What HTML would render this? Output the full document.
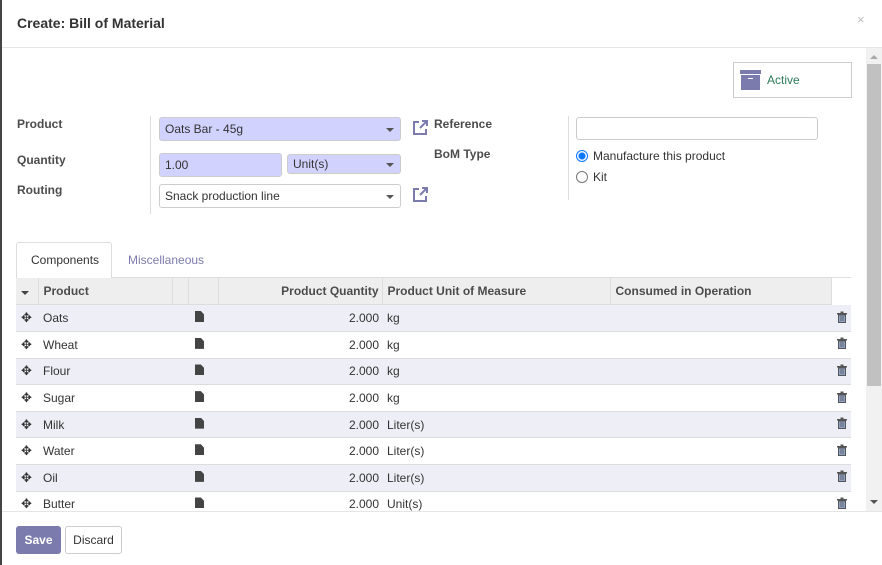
<!DOCTYPE html>
<html><head><style>
*{box-sizing:border-box;margin:0;padding:0}
body{width:882px;height:565px;overflow:hidden;font-family:"Liberation Sans",sans-serif;font-size:12px;color:#4c4c4c;background:#fff;position:relative}
.abs{position:absolute}
.lbl{font-weight:bold;color:#4c4c4c;font-size:12px}
.inp{position:absolute;border:1px solid #ccc;border-radius:3px;height:24px;padding:4px 5px;font-size:12px;color:#333}
.req{background:#d2d2ff}
.caret{position:absolute;right:6px;top:10px;width:0;height:0;border-left:4px solid transparent;border-right:4px solid transparent;border-top:4px solid #555}
table{border-collapse:collapse;position:absolute;left:16px;top:278px;width:835px;table-layout:fixed}
th{background:#eee;height:27px;text-align:left;font-weight:bold;padding:0 5px;border-left:1px solid #ddd;border-bottom:2px solid #ddd}
td{height:26.6px;padding:0 5px;border-bottom:1px solid #ddd;color:#333}
tr.o td{background:#eeeff6}
.r{text-align:right;padding-right:3px}
.doc{display:inline-block;width:9px;height:11px;background:#444;clip-path:polygon(0 0,65% 0,100% 30%,100% 100%,0 100%);margin-left:2px}
.mv{font-size:13px;color:#333}
.t{text-align:right;padding-right:4px}
</style></head><body>
<div class="abs" style="left:0;top:0;width:2px;height:565px;background:#444"></div>
<div class="abs" style="left:17px;top:15px;font-size:14px;font-weight:bold;color:#333">Create: Bill of Material</div>
<div class="abs" style="left:857px;top:12px;color:#bbb;font-size:13px">×</div>
<div class="abs" style="left:2px;top:47px;width:880px;height:1px;background:#e5e5e5"></div>
<div class="abs" style="left:866px;top:48px;width:16px;height:463px;background:#f1f1f1"></div>
<div class="abs" style="left:867px;top:64px;width:14px;height:322px;background:#c1c1c1"></div>
<div class="abs" style="left:870px;top:55px;border-left:4px solid transparent;border-right:4px solid transparent;border-bottom:4px solid #aaa"></div>
<div class="abs" style="left:870px;top:500px;border-left:4px solid transparent;border-right:4px solid transparent;border-top:4px solid #555"></div>
<div class="abs" style="left:733px;top:62px;width:119px;height:36px;border:1px solid #ccc"></div>
<div class="abs" style="left:740px;top:70px;width:21px;height:4px;background:#7c7bad"></div>
<div class="abs" style="left:741px;top:75px;width:19px;height:15px;background:#7c7bad"></div>
<div class="abs" style="left:748px;top:78px;width:5px;height:1px;background:#fff"></div>
<div class="abs" style="left:767px;top:73px;color:#2d7a5b;font-size:12px">Active</div>
<div class="abs lbl" style="left:17px;top:117px">Product</div>
<div class="abs lbl" style="left:17px;top:153px">Quantity</div>
<div class="abs lbl" style="left:17px;top:183px">Routing</div>
<div class="abs" style="left:150px;top:116px;width:1px;height:98px;background:#ddd"></div>
<div class="inp req" style="left:159px;top:117px;width:242px">Oats Bar - 45g<span class="caret"></span></div>
<div class="inp req" style="left:159px;top:153px;width:123px">1.00</div>
<div class="inp req" style="left:287px;top:154px;width:114px;height:20px;padding-top:2px">Unit(s)<span class="caret" style="top:8px"></span></div>
<div class="inp" style="left:159px;top:184px;width:242px">Snack production line<span class="caret"></span></div>
<svg class="abs" style="left:411px;top:119px" width="18" height="18" viewBox="0 0 18 18"><path d="M8 3H3v12h12v-5" fill="none" stroke="#7c7bad" stroke-width="2"/><path d="M9 9L16 2M11 2h5v5" fill="none" stroke="#7c7bad" stroke-width="2"/></svg>
<svg class="abs" style="left:411px;top:186px" width="18" height="18" viewBox="0 0 18 18"><path d="M8 3H3v12h12v-5" fill="none" stroke="#7c7bad" stroke-width="2"/><path d="M9 9L16 2M11 2h5v5" fill="none" stroke="#7c7bad" stroke-width="2"/></svg>
<div class="abs lbl" style="left:434px;top:117px">Reference</div>
<div class="abs lbl" style="left:434px;top:147px">BoM Type</div>
<div class="abs" style="left:568px;top:116px;width:1px;height:84px;background:#ddd"></div>
<div class="inp" style="left:576px;top:117px;width:242px;height:23px"></div>
<div class="abs" style="left:576px;top:150px;width:12px;height:12px;border-radius:50%;border:1px solid #0a75ff;background:radial-gradient(circle,#0a75ff 3px,#fff 4px)"></div>
<div class="abs" style="left:593px;top:149px;color:#333">Manufacture this product</div>
<div class="abs" style="left:576px;top:171px;width:12px;height:12px;border-radius:50%;border:1px solid #777"></div>
<div class="abs" style="left:593px;top:170px;color:#333">Kit</div>
<div class="abs" style="left:16px;top:277px;width:835px;height:1px;background:#ddd"></div>
<div class="abs" style="left:16px;top:242px;width:96px;height:36px;border:1px solid #ddd;border-bottom:none;border-radius:3px 3px 0 0;background:#fff"></div>
<div class="abs" style="left:31px;top:253px;color:#333">Components</div>
<div class="abs" style="left:128px;top:253px;color:#7c7bad">Miscellaneous</div>
<table>
<colgroup><col style="width:22px"><col style="width:134px"><col style="width:16px"><col style="width:30px"><col style="width:164px"><col style="width:228px"><col style="width:221px"><col></colgroup>
<tr><th style="border-left:none"><span style="display:inline-block;border-left:4px solid transparent;border-right:4px solid transparent;border-top:4px solid #444"></span></th><th>Product</th><th></th><th></th><th class="r">Product Quantity</th><th>Product Unit of Measure</th><th>Consumed in Operation</th><th style="background:#fff;border-bottom:none"></th></tr>
</table>
<svg width="0" height="0" style="position:absolute"><defs><symbol id="tr" viewBox="0 0 10 12"><rect x="0" y="2" width="10" height="1.5" fill="#555"/><rect x="3.5" y="0.5" width="3" height="1.5" fill="#555"/><path d="M1.5 4h7v7.5h-7z" fill="#8fa3c7" stroke="#555" stroke-width="1"/><path d="M4 5v5M6 5v5" stroke="#555" stroke-width="0.8"/></symbol></defs></svg>
<table style="top:305px">
<colgroup><col style="width:22px"><col style="width:150px"><col style="width:30px"><col style="width:164px"><col style="width:228px"><col style="width:221px"><col></colgroup>
<tr class="o"><td class="mv">✥</td><td>Oats</td><td><span class="doc"></span></td><td class="r">2.000</td><td>kg</td><td></td><td class="t"><svg width="10" height="12"><use href="#tr"/></svg></td></tr>
<tr><td class="mv">✥</td><td>Wheat</td><td><span class="doc"></span></td><td class="r">2.000</td><td>kg</td><td></td><td class="t"><svg width="10" height="12"><use href="#tr"/></svg></td></tr>
<tr class="o"><td class="mv">✥</td><td>Flour</td><td><span class="doc"></span></td><td class="r">2.000</td><td>kg</td><td></td><td class="t"><svg width="10" height="12"><use href="#tr"/></svg></td></tr>
<tr><td class="mv">✥</td><td>Sugar</td><td><span class="doc"></span></td><td class="r">2.000</td><td>kg</td><td></td><td class="t"><svg width="10" height="12"><use href="#tr"/></svg></td></tr>
<tr class="o"><td class="mv">✥</td><td>Milk</td><td><span class="doc"></span></td><td class="r">2.000</td><td>Liter(s)</td><td></td><td class="t"><svg width="10" height="12"><use href="#tr"/></svg></td></tr>
<tr><td class="mv">✥</td><td>Water</td><td><span class="doc"></span></td><td class="r">2.000</td><td>Liter(s)</td><td></td><td class="t"><svg width="10" height="12"><use href="#tr"/></svg></td></tr>
<tr class="o"><td class="mv">✥</td><td>Oil</td><td><span class="doc"></span></td><td class="r">2.000</td><td>Liter(s)</td><td></td><td class="t"><svg width="10" height="12"><use href="#tr"/></svg></td></tr>
<tr><td class="mv">✥</td><td>Butter</td><td><span class="doc"></span></td><td class="r">2.000</td><td>Unit(s)</td><td></td><td class="t"><svg width="10" height="12"><use href="#tr"/></svg></td></tr>
</table>
<div class="abs" style="left:2px;top:511px;width:880px;height:54px;background:#fff;border-top:1px solid #e5e5e5"></div>
<div class="abs" style="left:16px;top:526px;width:45px;height:28px;background:#7c7bad;border-radius:3px;color:#fff;font-weight:bold;font-size:12px;text-align:center;line-height:28px">Save</div>
<div class="abs" style="left:65px;top:526px;width:57px;height:28px;border:1px solid #ccc;border-radius:3px;color:#333;font-size:12px;text-align:center;line-height:26px">Discard</div>
</body></html>
